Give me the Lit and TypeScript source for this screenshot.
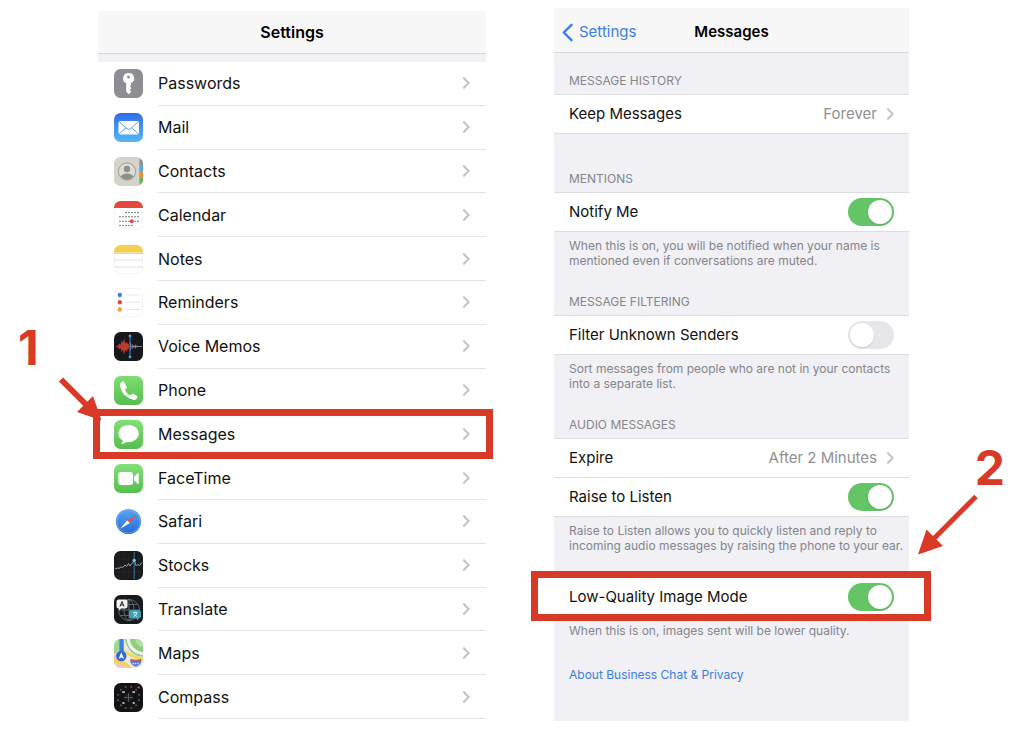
import { LitElement, html, css, svg, nothing } from "lit";
import { customElement, property } from "lit/decorators.js";

const dot = (x: number, y: number) => svg`<circle cx=${x} cy=${y} r=".75" fill="#555"/>`;
const tile = (fill: string) => svg`<rect width="29" height="29" rx="6.5" fill=${fill}/>`;

const calendarDots = () => {
  const rows: [number, number, number][] = [[12, 24, 11.5], [6, 24, 15.8], [6, 24, 20.2], [6, 18, 24.6]];
  return rows.map(([from, to, y]) => {
    const out = [];
    for (let x = from; x <= to; x += 3) out.push(dot(x, y));
    return out;
  });
};

const compassMarks = () =>
  Array.from({ length: 12 }, (_, i) => {
    const a = (i * Math.PI) / 6 + Math.PI / 12;
    return svg`<circle cx=${14.5 + 10.8 * Math.cos(a)} cy=${14.5 + 10.8 * Math.sin(a)} r="1" fill="#5c5c5e"/>`;
  });

const icons: Record<string, unknown> = {
  passwords: svg`${tile("#8e8d93")}
    <path fill="#fff" fill-rule="evenodd" d="M14.500 4a5.400 5.400 0 0 0-2.300 10.300V22.600l2.400 2.600 2.700-2.500-1.600-1.800 1.700-1.700-1.500-1.800 1.100-1.200V14.300A5.400 5.400 0 0 0 14.500 4zm0 2.400a1.500 1.500 0 1 1 0 3 1.500 1.500 0 0 1 0-3z"/>`,
  mail: svg`<linearGradient id="g" x2="0" y2="1"><stop stop-color="#2f6ce9"/><stop offset="1" stop-color="#55b9f6"/></linearGradient>${tile("url(#g)")}
    <rect x="4.500" y="8" width="20.500" height="13.500" rx="1.800" fill="#fff"/>
    <path d="M5.200 8.800l7.800 6.900q1.700 1.400 3.400 0l7.900-6.900M5.200 20.900l6.800-6.200M24.300 20.900l-6.800-6.200" fill="none" stroke="#4a8fe8" stroke-width=".9"/>`,
  contacts: svg`<clipPath id="c">${tile("#000")}</clipPath><g clip-path="url(#c)">
    <rect width="29" height="29" fill="#d4d3ca"/><rect x="25.200" width="3.800" height="29" fill="#b9b8b0"/>
    <rect x="25.600" y="3" width="3.400" height="5" fill="#8b8f90"/><rect x="25.600" y="8" width="3.400" height="6.500" fill="#55a9e8"/>
    <rect x="25.600" y="14.500" width="3.400" height="6" fill="#ef8c35"/><rect x="25.600" y="20.500" width="3.400" height="6" fill="#62b757"/></g>
    <circle cx="13" cy="14.500" r="8.600" fill="#dcdbd4" stroke="#96958f" stroke-width=".9"/>
    <circle cx="13" cy="12" r="3.200" fill="#8e8e8c"/><path d="M6.400 19.600a8.600 8.600 0 0 0 13.200 0q-2.500-3-6.600-3t-6.600 3z" fill="#8e8e8c"/>`,
  calendar: svg`<rect x=".3" y=".3" width="28.400" height="28.400" rx="6.300" fill="#fff" stroke="#efefef" stroke-width=".6"/>
    <path d="M0 7V6.500A6.500 6.500 0 0 1 6.500 0h16A6.500 6.500 0 0 1 29 6.500V7z" fill="#e3493d"/>
    ${calendarDots()}<circle cx="17.700" cy="20.200" r="2" fill="#e2475a"/>`,
  notes: svg`<rect x=".3" y=".3" width="28.400" height="28.400" rx="6.300" fill="#fff" stroke="#ececec" stroke-width=".6"/>
    <path d="M0 7.500v-1A6.500 6.500 0 0 1 6.500 0h16A6.500 6.500 0 0 1 29 6.500v1z" fill="#f6d04d"/>
    <path d="M0 8.300h29" stroke="#c9c4ae" stroke-width=".9"/><path d="M0 15h29M0 22h29" stroke="#d9d9d9" stroke-width=".8"/>`,
  reminders: svg`<rect x=".3" y=".3" width="28.400" height="28.400" rx="6.300" fill="#fff" stroke="#ececec" stroke-width=".7"/>
    <circle cx="5.800" cy="7" r="2.200" fill="#3d83d2"/><circle cx="5.800" cy="14.200" r="2.200" fill="#de4b43"/><circle cx="5.800" cy="21.500" r="2.200" fill="#ef9a3b"/>
    <path d="M11.500 7H26M11.500 14.200H26M11.500 21.500H26" stroke="#dedede" stroke-width=".8"/>`,
  voice: svg`${tile("#17181b")}
    <path d="M1.500 14.500L4 13.700l1.400-2.200 1.200 1.500 1-4.500 1.200 2.500 1.300-4.500 1.200 5 1.300-1.500 1.600 2.500.8-.5v5l-1-.6-1.400 2.800-1.200-1.500-1.300 4.800-1.300-5-1.200 3-1-4.500-1.200 1.400L4 15.400z" fill="#c0392f"/>
    <path d="M16.500 10.500v8M18.200 12v5M19.900 13.200v2.700M21.600 12.600v3.800M23.300 13.700v1.700" stroke="#8b8d90" stroke-width=".9"/><path d="M17 14.500h11" stroke="#9a9b9d" stroke-width=".8"/>
    <path d="M16 3.500v22" stroke="#3c8fd2" stroke-width="1"/><circle cx="16" cy="4" r="1.400" fill="#4aa5ea"/><circle cx="16" cy="25" r="1.400" fill="#4aa5ea"/>`,
  phone: svg`<linearGradient id="g" x2="0" y2="1"><stop stop-color="#7fdd74"/><stop offset="1" stop-color="#55bf4e"/></linearGradient>${tile("url(#g)")}
    <path d="M8.300 5.500Q5.700 7 6 9.800q1 6 5.200 9.800 4 3.700 8.600 4.300 2.500.1 3.600-2.500.2-.8-.5-1.300l-3.400-2.400q-.9-.5-1.600.2l-1 1.200q-.6.500-1.300.1-2.900-1.700-4.400-4.700-.3-.700.200-1.200l1-1q.7-.7.2-1.500L10 6q-.7-1-1.700-.5z" fill="#fff"/>`,
  messages: svg`<linearGradient id="g" x2="0" y2="1"><stop stop-color="#83df78"/><stop offset="1" stop-color="#55bf4e"/></linearGradient>${tile("url(#g)")}
    <path d="M14.600 5C8.900 5 4.400 8.800 4.400 13.600c0 3 1.800 5.700 4.500 7.200-.1 1.200-.8 2.300-1.900 3.200 2.200 0 4-.7 5.200-2 .8.100 1.600.2 2.400.2 5.700 0 10.200-3.900 10.200-8.600S20.300 5 14.600 5z" fill="#fff"/>`,
  facetime: svg`<linearGradient id="g" x2="0" y2="1"><stop stop-color="#83df78"/><stop offset="1" stop-color="#55bf4e"/></linearGradient>${tile("url(#g)")}
    <rect x="4.300" y="8" width="14.700" height="13" rx="3" fill="#fff"/><path d="M20 12.700l3.700-3.500q1-.7 1 .5v9.600q0 1.200-1 .5L20 16.300z" fill="#fff"/>`,
  safari: svg`<linearGradient id="g" x2="0" y2="1"><stop stop-color="#56a5f2"/><stop offset="1" stop-color="#2a69d4"/></linearGradient>
    <circle cx="14.500" cy="14.500" r="12.600" fill="url(#g)"/><circle cx="14.500" cy="14.500" r="11.600" fill="none" stroke="#8fc0f5" stroke-width=".5"/>
    <path d="M22.800 7.400l-7 8.600-2.800-2.600z" fill="#e0524e"/><path d="M6.200 21.800l6.800-8.400 2.800 2.600z" fill="#fff"/>`,
  stocks: svg`${tile("#1a1b1d")}
    <path d="M5 2v25M10 2v25M15 2v25M25 2v25M1 8h27M1 21h27" stroke="#2b2c2e" stroke-width=".6"/>
    <path d="M1 18l2.500-1 1.500.4L7 15.800l1.500 1L11 14l1.500 1.500 2-3L16 15l1.500-2 2.800-3 2 5 1.500-1.500 1.700 1L28 11.500" fill="none" stroke="#9ea3a6" stroke-width="1"/>
    <path d="M20.200 1v27" stroke="#2f7f9d" stroke-width="1"/><circle cx="20.200" cy="9.500" r="1.700" fill="#6cc5e4"/>`,
  translate: svg`${tile("#17191c")}
    <g fill="none" stroke="#67777c" stroke-width=".8"><circle cx="15" cy="15" r="10.500"/><ellipse cx="15" cy="15" rx="5" ry="10.500"/><path d="M4.500 15h21M15 4.500v21M6.500 9.500h17M6.500 20.500h17"/></g>
    <path d="M4.500 4.500h7a2 2 0 0 1 2 2v5a2 2 0 0 1-2 2H7l-2 2v-2h-.5a2 2 0 0 1-2-2v-5a2 2 0 0 1 2-2z" fill="#f2f2f2"/>
    <path d="M6 11.500L8 6.500l2 5M6.700 9.900h2.600" fill="none" stroke="#222" stroke-width="1"/>
    <path d="M17 15h8a2 2 0 0 1 2 2v4.500a2 2 0 0 1-2 2h-.7v2.300l-2.300-2.300h-5a2 2 0 0 1-2-2V17a2 2 0 0 1 2-2z" fill="#3fa0b2"/>
    <path d="M19 17.600h4.500M21.200 16.600v1M19.600 21.700q3-1 3.300-4M19.800 18.600q1 2.300 3.400 3" fill="none" stroke="#d6f2f6" stroke-width=".9"/>`,
  maps: svg`<clipPath id="c">${tile("#000")}</clipPath><g clip-path="url(#c)">
    <rect width="29" height="29" fill="#ebe9e2"/><path d="M11 0h18v18Q14 16 11 0z" fill="#8bd07c"/>
    <path d="M14 0q2 13 16 15" fill="none" stroke="#f7f7f2" stroke-width="3"/><path d="M21 0q1 7 8 8V0z" fill="#b4dea4"/>
    <path d="M0 0h5v12L0 15z" fill="#9bd98c"/><path d="M0 15l4-3 7 10v7H0z" fill="#f3c3cd"/>
    <path d="M0 20q10-1 18 9h-5Q8 24 0 24z" fill="#f5d254"/><path d="M10 10q8 6 19 9v3Q17 19 10 14z" fill="#f6d75a"/>
    <path d="M7.500 0v15" stroke="#3f7fe0" stroke-width="4.500"/></g>
    <circle cx="7.300" cy="17" r="5.200" fill="#2c6bd0"/><path d="M7.300 13.300l2.700 6.500-2.700-1.300-2.700 1.300z" fill="#fff"/>
    <path d="M16.500 20q5.300 2 10.600 0 2 5.200-5.300 8-7.300-2.800-5.300-8z" fill="#4e79cf" stroke="#f2f2f2" stroke-width=".6"/><path d="M16.500 19.800q5.300 2 10.600 0l.2 2H16.300z" fill="#d9534e"/>
    <path d="M18.500 24.500h6.500" stroke="#dce6fa" stroke-width="1.600" stroke-dasharray="1.500 .8"/>`,
  compass: svg`${tile("#141416")}${compassMarks()}
    <path d="M14.500 10v9M10 14.500h9" stroke="#77787a" stroke-width=".7"/><circle cx="14.500" cy="14.500" r="3" fill="none" stroke="#454648" stroke-width=".6"/>
    <g fill="#b8b8ba"><rect x="8.200" y="8.200" width="2.600" height="1.800"/><rect x="18.400" y="8.200" width="2.600" height="1.800"/><rect x="8.400" y="19" width="2" height="2"/><rect x="18.700" y="19" width="2" height="2"/></g>
    <path d="M22.800 4l2.600-.8.500 2.400-1.700-.1z" fill="#e2443f"/>`,
};

@customElement("app-icon")
export class AppIcon extends LitElement {
  @property() name = "";
  static styles = css`
    :host { display: block; width: 29px; height: 29px; flex: none; }
    svg { display: block; width: 100%; height: 100%; }
  `;
  render() {
    return html`<svg viewBox="0 0 29 29" aria-hidden="true">${icons[this.name] ?? nothing}</svg>`;
  }
}

const apps: [string, string][] = [
  ["passwords", "Passwords"], ["mail", "Mail"], ["contacts", "Contacts"], ["calendar", "Calendar"],
  ["notes", "Notes"], ["reminders", "Reminders"], ["voice", "Voice Memos"], ["phone", "Phone"],
  ["messages", "Messages"], ["facetime", "FaceTime"], ["safari", "Safari"], ["stocks", "Stocks"],
  ["translate", "Translate"], ["maps", "Maps"], ["compass", "Compass"],
];

const chevron = html`<svg class="chevron" viewBox="0 0 8 14" aria-hidden="true"><path d="M1.300 1.500L6.700 7l-5.400 5.500"/></svg>`;

@customElement("app-root")
export class AppRoot extends LitElement {
  static styles = css`
    :host { display: block; background: #fff; color: #111; font-family: Inter, "Liberation Sans", sans-serif; font-size: 16px; line-height: 20px; }
    * { box-sizing: border-box; }
    a { color: inherit; text-decoration: none; }
    .page { display: grid; grid-template-columns: 388fr 355fr; column-gap: 68px; padding: 8px 115px 15px 98px; }
    .panel { display: flex; flex-direction: column; }
    .apps-panel { margin: 3px 0 2px; }
    .bar { display: grid; grid-template-columns: 1fr auto 1fr; align-items: center; height: 45px; padding: 4px 8px 0; background: #f7f7f8; border-bottom: 1px solid #d6d6dc; font-size: 15px; }
    .apps-panel .bar { height: 43px; padding-top: 0; font-size: 16px; }
    .title { grid-column: 2; margin: 0; font-size: inherit; font-weight: 600; color: #000; }
    .back { display: flex; align-items: center; gap: 6px; color: #3b7fe6; }
    .back svg { width: 11px; height: 19px; fill: none; stroke: currentColor; stroke-width: 2.400; stroke-linecap: round; stroke-linejoin: round; }
    .strip { height: 8px; background: #f0f0f5; }
    .apps { flex: 1; display: flex; flex-direction: column; list-style: none; margin: 0; padding: 0; }
    .app { position: relative; flex: 1; display: flex; }
    .app-link { flex: 1; display: flex; align-items: center; gap: 15px; padding-left: 16px; }
    .app-text { flex: 1; align-self: stretch; display: flex; align-items: center; justify-content: space-between; padding-right: 16px; border-bottom: 1px solid #e4e4e6; }
    .chevron { width: 8px; height: 14px; flex: none; fill: none; stroke: #c3c3c6; stroke-width: 2; }
    .messages { background: #f0f0f5; padding-bottom: 39px; }
    .group { padding-top: 20px; }
    .group + .group { padding-top: 26px; }
    .group.spaced { padding-top: 37px; }
    .group.bare { padding-top: 24px; }
    .caption, .note { margin: 0; padding: 0 3px 0 15px; font-size: 12px; line-height: 15px; color: #85858b; }
    .caption { padding-bottom: 6px; font-weight: 400; }
    .note { padding-top: 6px; }
    .rows { background: #fff; border-top: 1px solid #dddde2; }
    .row { position: relative; isolation: isolate; display: flex; align-items: center; justify-content: space-between; width: 100%; height: 39px; margin: 0; padding: 0 15px; border: 0; border-bottom: 1px solid #dddde2; background: none; font: inherit; font-size: 15px; color: inherit; text-align: left; }
    .value { display: flex; align-items: center; gap: 9px; color: #8f8f94; }
    .switch { appearance: none; flex: none; width: 46px; height: 28px; margin: 0; padding: 2px; border-radius: 14px; background: #e6e6ea; display: flex; }
    .switch::before { content: ""; width: 24px; height: 24px; border-radius: 50%; background: #fff; box-shadow: 0 1px 2px #0000001f; }
    .switch:checked { background: #65c466; justify-content: flex-end; }
    .more { display: block; padding: 29px 15px 0; font-size: 12px; line-height: 15px; color: #3b7fe6; }
    .mark { position: absolute; border: 7px solid #d93a28; pointer-events: none; }
    .mark-app { inset: -3px -7px -3px -5px; }
    .mark-row { inset: -7px -22px -5px -23px; background: #fff; z-index: -1; }
    .step { position: absolute; font: 700 48px/50px Inter, "Liberation Sans", sans-serif; color: #d93a28; }
    .arrow { position: absolute; fill: #d93a28; stroke: #d93a28; }
    .step-one { left: -80px; bottom: 83px; }
    .arrow-one { left: -42px; bottom: 34px; width: 48px; height: 48px; }
    .step-two { right: -96px; bottom: 123px; }
    .arrow-two { right: -72px; bottom: 59px; width: 64px; height: 64px; }
  `;

  private markApp = html`<div class="mark mark-app"></div>
    <svg class="arrow arrow-one" viewBox="0 0 48 48" aria-hidden="true"><path d="M5 5.500L31 31.500" stroke-width="6"/><path d="M21 38L37 22 45.500 46.500z" stroke="none"/></svg>
    <span class="step step-one">1</span>`;

  private markRow = html`<span class="mark mark-row"></span>
    <svg class="arrow arrow-two" viewBox="0 0 64 64" aria-hidden="true"><path d="M59 3.500L16 46.500" stroke-width="5"/><path d="M1 61.500L9.500 36.500 26 53z" stroke="none"/></svg>
    <span class="step step-two">2</span>`;

  private link(label: string, value: string) {
    return html`<button class="row" type="button"><span>${label}</span><span class="value">${value}${chevron}</span></button>`;
  }

  private toggle(label: string, on: boolean, mark: unknown = nothing) {
    return html`<label class="row"><span>${label}</span><input class="switch" type="checkbox" role="switch" .checked=${on}>${mark}</label>`;
  }

  render() {
    return html`<main class="page">
      <section class="panel apps-panel">
        <header class="bar"><h1 class="title">Settings</h1></header>
        <div class="strip"></div>
        <ul class="apps">
          ${apps.map(([icon, label]) => html`<li class="app">
            <a class="app-link" href="#${icon}"><app-icon name=${icon}></app-icon><span class="app-text">${label}${chevron}</span></a>
            ${icon === "messages" ? this.markApp : nothing}
          </li>`)}
        </ul>
      </section>
      <section class="panel messages">
        <header class="bar">
          <a class="back" href="#settings"><svg viewBox="0 0 11 19" aria-hidden="true"><path d="M9.500 1.800L1.800 9.500l7.700 7.700"/></svg>Settings</a>
          <h1 class="title">Messages</h1>
        </header>
        <div class="group">
          <h2 class="caption">MESSAGE HISTORY</h2>
          <div class="rows">${this.link("Keep Messages", "Forever")}</div>
        </div>
        <div class="group spaced">
          <h2 class="caption">MENTIONS</h2>
          <div class="rows">${this.toggle("Notify Me", true)}</div>
          <p class="note">When this is on, you will be notified when your name is<br>mentioned even if conversations are muted.</p>
        </div>
        <div class="group">
          <h2 class="caption">MESSAGE FILTERING</h2>
          <div class="rows">${this.toggle("Filter Unknown Senders", false)}</div>
          <p class="note">Sort messages from people who are not in your contacts<br>into a separate list.</p>
        </div>
        <div class="group">
          <h2 class="caption">AUDIO MESSAGES</h2>
          <div class="rows">${this.link("Expire", "After 2 Minutes")}${this.toggle("Raise to Listen", true)}</div>
          <p class="note">Raise to Listen allows you to quickly listen and reply to<br>incoming audio messages by raising the phone to your ear.</p>
        </div>
        <div class="group bare">
          <div class="rows">${this.toggle("Low-Quality Image Mode", true, this.markRow)}</div>
          <p class="note">When this is on, images sent will be lower quality.</p>
        </div>
        <a class="more" href="#privacy">About Business Chat &amp; Privacy</a>
      </section>
    </main>`;
  }
}
